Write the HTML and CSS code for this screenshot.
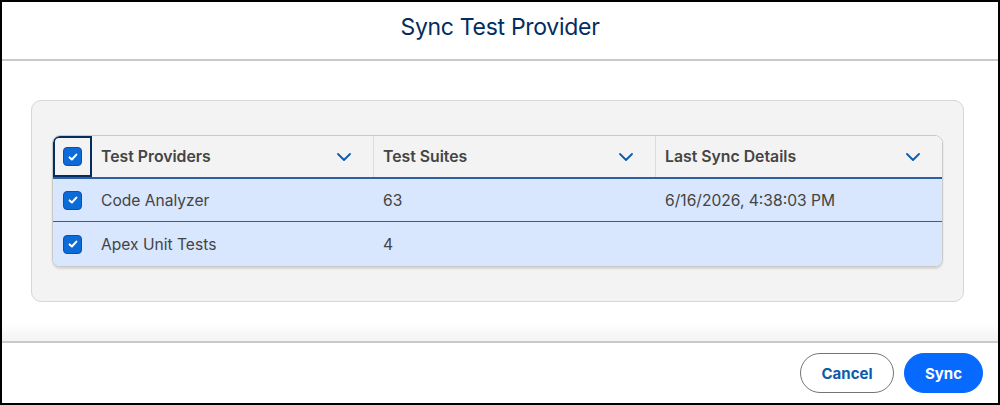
FILE: index.html
```html
<!DOCTYPE html>
<html>
<head>
<meta charset="utf-8">
<link rel="stylesheet" href="styles.css">
</head>
<body>
<div class="modal">
  <header class="modal-header">
    <h1 class="title">Sync Test Provider</h1>
  </header>
  <main class="modal-body">
    <div class="panel">
      <div class="table">
        <div class="row head">
          <div class="cell cb-cell focus"><span class="cb"><svg viewBox="0 0 12 12"><path d="M2.6 6.4 L4.9 8.5 L9.4 3.6" /></svg></span></div>
          <div class="cell th">Test Providers<svg class="chev" viewBox="0 0 14 8"><path d="M1 1 L7 7 L13 1"/></svg></div>
          <div class="cell th">Test Suites<svg class="chev" viewBox="0 0 14 8"><path d="M1 1 L7 7 L13 1"/></svg></div>
          <div class="cell th">Last Sync Details<svg class="chev" viewBox="0 0 14 8"><path d="M1 1 L7 7 L13 1"/></svg></div>
        </div>
        <div class="row sel">
          <div class="cell cb-cell"><span class="cb"><svg viewBox="0 0 12 12"><path d="M2.6 6.4 L4.9 8.5 L9.4 3.6" /></svg></span></div>
          <div class="cell td">Code Analyzer</div>
          <div class="cell td">63</div>
          <div class="cell td">6/16/2026, 4:38:03 PM</div>
        </div>
        <div class="row sel last">
          <div class="cell cb-cell"><span class="cb"><svg viewBox="0 0 12 12"><path d="M2.6 6.4 L4.9 8.5 L9.4 3.6" /></svg></span></div>
          <div class="cell td">Apex Unit Tests</div>
          <div class="cell td">4</div>
          <div class="cell td"></div>
        </div>
      </div>
    </div>
  </main>
  <footer class="modal-footer">
    <button class="btn neutral">Cancel</button>
    <button class="btn brand">Sync</button>
  </footer>
</div>
</body>
</html>
```

FILE: styles.css
```css
html, body {
  margin: 0;
  padding: 0;
  background: #fff;
}
body {
  font-family: Inter, "Liberation Sans", Arial, sans-serif;
}
.modal {
  width: 1000px;
  height: 405px;
  box-sizing: border-box;
  border: 2px solid #000;
  display: flex;
  flex-direction: column;
  background: #fff;
}
.modal-header {
  height: 57px;
  border-bottom: 2px solid #c9c9c9;
  display: flex;
  align-items: center;
  justify-content: center;
}
.title {
  margin: 0 0 8px 0;
  font-size: 23px;
  font-weight: 400;
  color: #032d60;
  letter-spacing: -0.3px;
}
.modal-body {
  flex: 1;
  padding: 39px 34px 0 29px;
  background: linear-gradient(to bottom, #fff 0, #fff 262px, #f4f4f4 278px);
}
.panel {
  height: 202px;
  box-sizing: border-box;
  border: 1px solid #d6d6d6;
  border-radius: 10px;
  background: #f3f3f3;
  padding: 34px 20px;
}
.table {
  border: 1px solid #c9c9c9;
  border-radius: 8px;
  background: #fff;
  box-shadow: 0 2px 2px rgba(0,0,0,0.12);
  overflow: hidden;
}
.row {
  display: grid;
  grid-template-columns: 39px 282px 282px 1fr;
  height: 42px;
}
.row.head {
  background: #f3f3f3;
  border-bottom: 2px solid #2f5ea8;
  height: 41px;
}
.row.sel {
  background: #d8e6fe;
  border-bottom: 1px solid #2f5ea8;
}
.row.sel.last {
  border-bottom: none;
  height: 44px;
}
.cell {
  display: flex;
  align-items: center;
  box-sizing: border-box;
  font-size: 15.6px;
  color: #444;
}
.cb-cell {
  justify-content: center;
}
.cb-cell.focus {
  border: 2px solid #032d60;
  border-radius: 6px 0 0 0;
}
.th {
  font-size: 15.8px;
  font-weight: 600;
  color: #444;
  padding: 0 22px 0 9px;
  justify-content: space-between;
  border-right: 1px solid #dcdcdc;
}
.th:last-child {
  border-right: none;
}
.td {
  padding-left: 9px;
  color: #444;
}
.cb {
  width: 19px;
  height: 19px;
  box-sizing: border-box;
  border-radius: 4px;
  background: #0b6bd8;
  border: 1px solid #1d4b9a;
  display: flex;
  align-items: center;
  justify-content: center;
}
.cb svg {
  width: 12px;
  height: 12px;
  fill: none;
  stroke: #fff;
  stroke-width: 2;
  stroke-linecap: round;
  stroke-linejoin: round;
}
.chev {
  width: 14px;
  height: 8px;
  fill: none;
  stroke: #0b5cab;
  stroke-width: 1.8;
  stroke-linecap: round;
  stroke-linejoin: round;
}
.modal-footer {
  height: 60px;
  border-top: 2px solid #c9c9c9;
  display: flex;
  align-items: center;
  justify-content: flex-end;
  gap: 10px;
  padding-right: 15px;
}
.btn {
  font-family: Inter, "Liberation Sans", Arial, sans-serif;
  font-size: 15px;
  font-weight: 700;
  height: 40px;
  border-radius: 20px;
  cursor: pointer;
}
.neutral {
  width: 94px;
  background: #fff;
  color: #0b5cab;
  border: 1px solid #747474;
}
.brand {
  width: 79px;
  background: #066afe;
  color: #fff;
  border: 1px solid #066afe;
}
```
